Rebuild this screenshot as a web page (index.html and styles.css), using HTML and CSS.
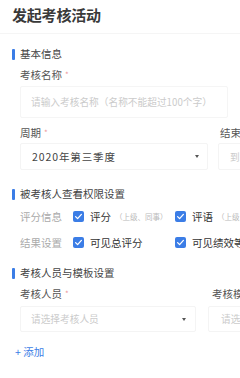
FILE: index.html
```html
<!DOCTYPE html>
<html lang="zh-CN">
<head>
<meta charset="utf-8">
<link rel="stylesheet" href="styles.css">
</head>
<body>
<div class="page">
  <header class="header"><h1 class="title">发起考核活动</h1></header>

  <section class="section">
    <div class="sec-title sec-first"><span class="bar"></span>基本信息</div>
    <div class="label lbl-name">考核名称<span class="req">*</span></div>
    <div class="input"><span class="ph">请输入考核名称（名称不能超过100个字）</span></div>

    <div class="cols cols-period">
      <div class="col col-left">
        <div class="label">周期<span class="req">*</span></div>
        <div class="select"><span class="val">2020年第三季度</span><span class="arrow"></span></div>
      </div>
      <div class="col col-right">
        <div class="label label-r">结束时间<span class="req">*</span></div>
        <div class="select"><span class="ph">到</span></div>
      </div>
    </div>
  </section>

  <section class="section">
    <div class="sec-title sec-2"><span class="bar"></span>被考核人查看权限设置</div>
    <div class="perm-row perm-1">
      <span class="perm-label">评分信息</span>
      <span class="opt opt-a"><span class="cb"><svg viewBox="0 0 11 11"><path d="M2.6 5.6 L4.6 7.6 L8.4 3.4" fill="none" stroke="#fff" stroke-width="1.3" stroke-linecap="round" stroke-linejoin="round"/></svg></span><span class="opt-text">评分</span><span class="hint">（上级、同事）</span></span>
      <span class="opt"><span class="cb"><svg viewBox="0 0 11 11"><path d="M2.6 5.6 L4.6 7.6 L8.4 3.4" fill="none" stroke="#fff" stroke-width="1.3" stroke-linecap="round" stroke-linejoin="round"/></svg></span><span class="opt-text">评语</span><span class="hint">（上级、同事）</span></span>
    </div>
    <div class="perm-row perm-2">
      <span class="perm-label">结果设置</span>
      <span class="opt opt-a"><span class="cb"><svg viewBox="0 0 11 11"><path d="M2.6 5.6 L4.6 7.6 L8.4 3.4" fill="none" stroke="#fff" stroke-width="1.3" stroke-linecap="round" stroke-linejoin="round"/></svg></span><span class="opt-text">可见总评分</span></span>
      <span class="opt"><span class="cb"><svg viewBox="0 0 11 11"><path d="M2.6 5.6 L4.6 7.6 L8.4 3.4" fill="none" stroke="#fff" stroke-width="1.3" stroke-linecap="round" stroke-linejoin="round"/></svg></span><span class="opt-text">可见绩效等级</span></span>
    </div>
  </section>

  <section class="section">
    <div class="sec-title sec-3"><span class="bar"></span>考核人员与模板设置</div>
    <div class="cols cols-people">
      <div class="col col-left2">
        <div class="label">考核人员<span class="req">*</span></div>
        <div class="select select-sm"><span class="ph">请选择考核人员</span><span class="arrow arrow-2"></span></div>
      </div>
      <div class="col col-right2">
        <div class="label label-r2">考核模板<span class="req">*</span></div>
        <div class="select select-sm"><span class="ph">请选择考核模板</span></div>
      </div>
    </div>
    <div class="add">+ 添加</div>
  </section>
</div>
</body>
</html>
```

FILE: styles.css
```css
html, body {
  margin: 0;
  padding: 0;
  overflow: hidden;
  background: #fff;
}
body {
  font-family: "Noto Sans CJK SC", "Noto Sans", sans-serif;
  color: #333;
}
.page {
  width: 460px;
}
.header {
  height: 33px;
  border-bottom: 1px solid #f5f5f5;
  padding-left: 12px;
}
.title {
  margin: 0;
  font-size: 15px;
  line-height: 30px;
  font-weight: 700;
  color: #3a3a3a;
  letter-spacing: -0.2px;
}
.section {
  padding-left: 12px;
}
.sec-title {
  display: flex;
  align-items: center;
  gap: 5px;
  font-size: 10.5px;
  line-height: 14px;
  color: #444;
}
.sec-first { margin-top: 13px; }
.sec-2 { margin-top: 17px; }
.sec-3 { margin-top: 14px; }
.bar {
  width: 3px;
  height: 11px;
  border-radius: 1px;
  background: #3b7de6;
}
.label {
  margin-left: 8px;
  font-size: 10.5px;
  line-height: 14px;
  color: #555;
}
.req {
  color: #e99;
  font-size: 8px;
  margin-left: 3px;
  vertical-align: top;
}
.lbl-name { margin-top: 7px; }
.input {
  margin: 4px 0 0 8px;
  width: 208px;
  height: 32px;
  box-sizing: border-box;
  border: 1px solid #f5f5f5;
  border-radius: 2px;
  display: flex;
  align-items: center;
  padding-left: 10px;
  white-space: nowrap;
  overflow: hidden;
}
.ph {
  font-size: 9.7px;
  color: #cbcbcb;
  white-space: nowrap;
}
.cols {
  display: flex;
  margin-left: 8px;
}
.cols-period { margin-top: 8px; gap: 10px; }
.col-left { width: 188px; flex: none; }
.col-right { width: 200px; flex: none; }
.col .label { margin-left: 0; }
.label-r { padding-left: 2px; }
.select {
  margin-top: 3px;
  height: 27px;
  box-sizing: border-box;
  border: 1px solid #f4f4f4;
  border-radius: 2px;
  display: flex;
  align-items: center;
  padding: 0 8px 0 11px;
  white-space: nowrap;
  overflow: hidden;
}
.val {
  font-size: 10.5px;
  color: #444;
  flex: 1;
  letter-spacing: 0.9px;
}
.arrow {
  width: 0;
  height: 0;
  border-left: 2.5px solid transparent;
  border-right: 2.5px solid transparent;
  border-top: 3px solid #555;
  margin-left: auto;
}
.perm-row {
  display: flex;
  align-items: center;
  height: 20px;
  margin-left: 8px;
  white-space: nowrap;
}
.perm-1 { margin-top: 5px; }
.perm-2 { margin-top: 6px; }
.perm-label {
  width: 53px;
  flex: none;
  font-size: 10.5px;
  color: #aaa;
}
.opt {
  display: flex;
  align-items: center;
}
.opt-a { width: 102px; flex: none; }
.cb {
  width: 11px;
  height: 11px;
  border-radius: 2px;
  background: #3b7de6;
  display: flex;
  flex: none;
}
.cb svg { width: 11px; height: 11px; }
.opt-text {
  margin-left: 6px;
  font-size: 10.5px;
  color: #333;
}
.hint {
  margin-left: 4px;
  font-size: 7.5px;
  color: #bbb;
}
.cols-people { margin-top: 7px; gap: 12px; }
.col-left2 { width: 176px; flex: none; }
.col-right2 { width: 200px; flex: none; }
.label-r2 { padding-left: 4px; }
.select-sm {
  margin-top: 5px;
  height: 26px;
  padding-left: 10px;
}
.col-right2 .select-sm { padding-left: 12px; }
.arrow-2 { margin-right: 1px; }
.add {
  margin-top: 13px;
  margin-left: 3px;
  font-size: 10.5px;
  line-height: 14px;
  color: #3b7de6;
}
```
